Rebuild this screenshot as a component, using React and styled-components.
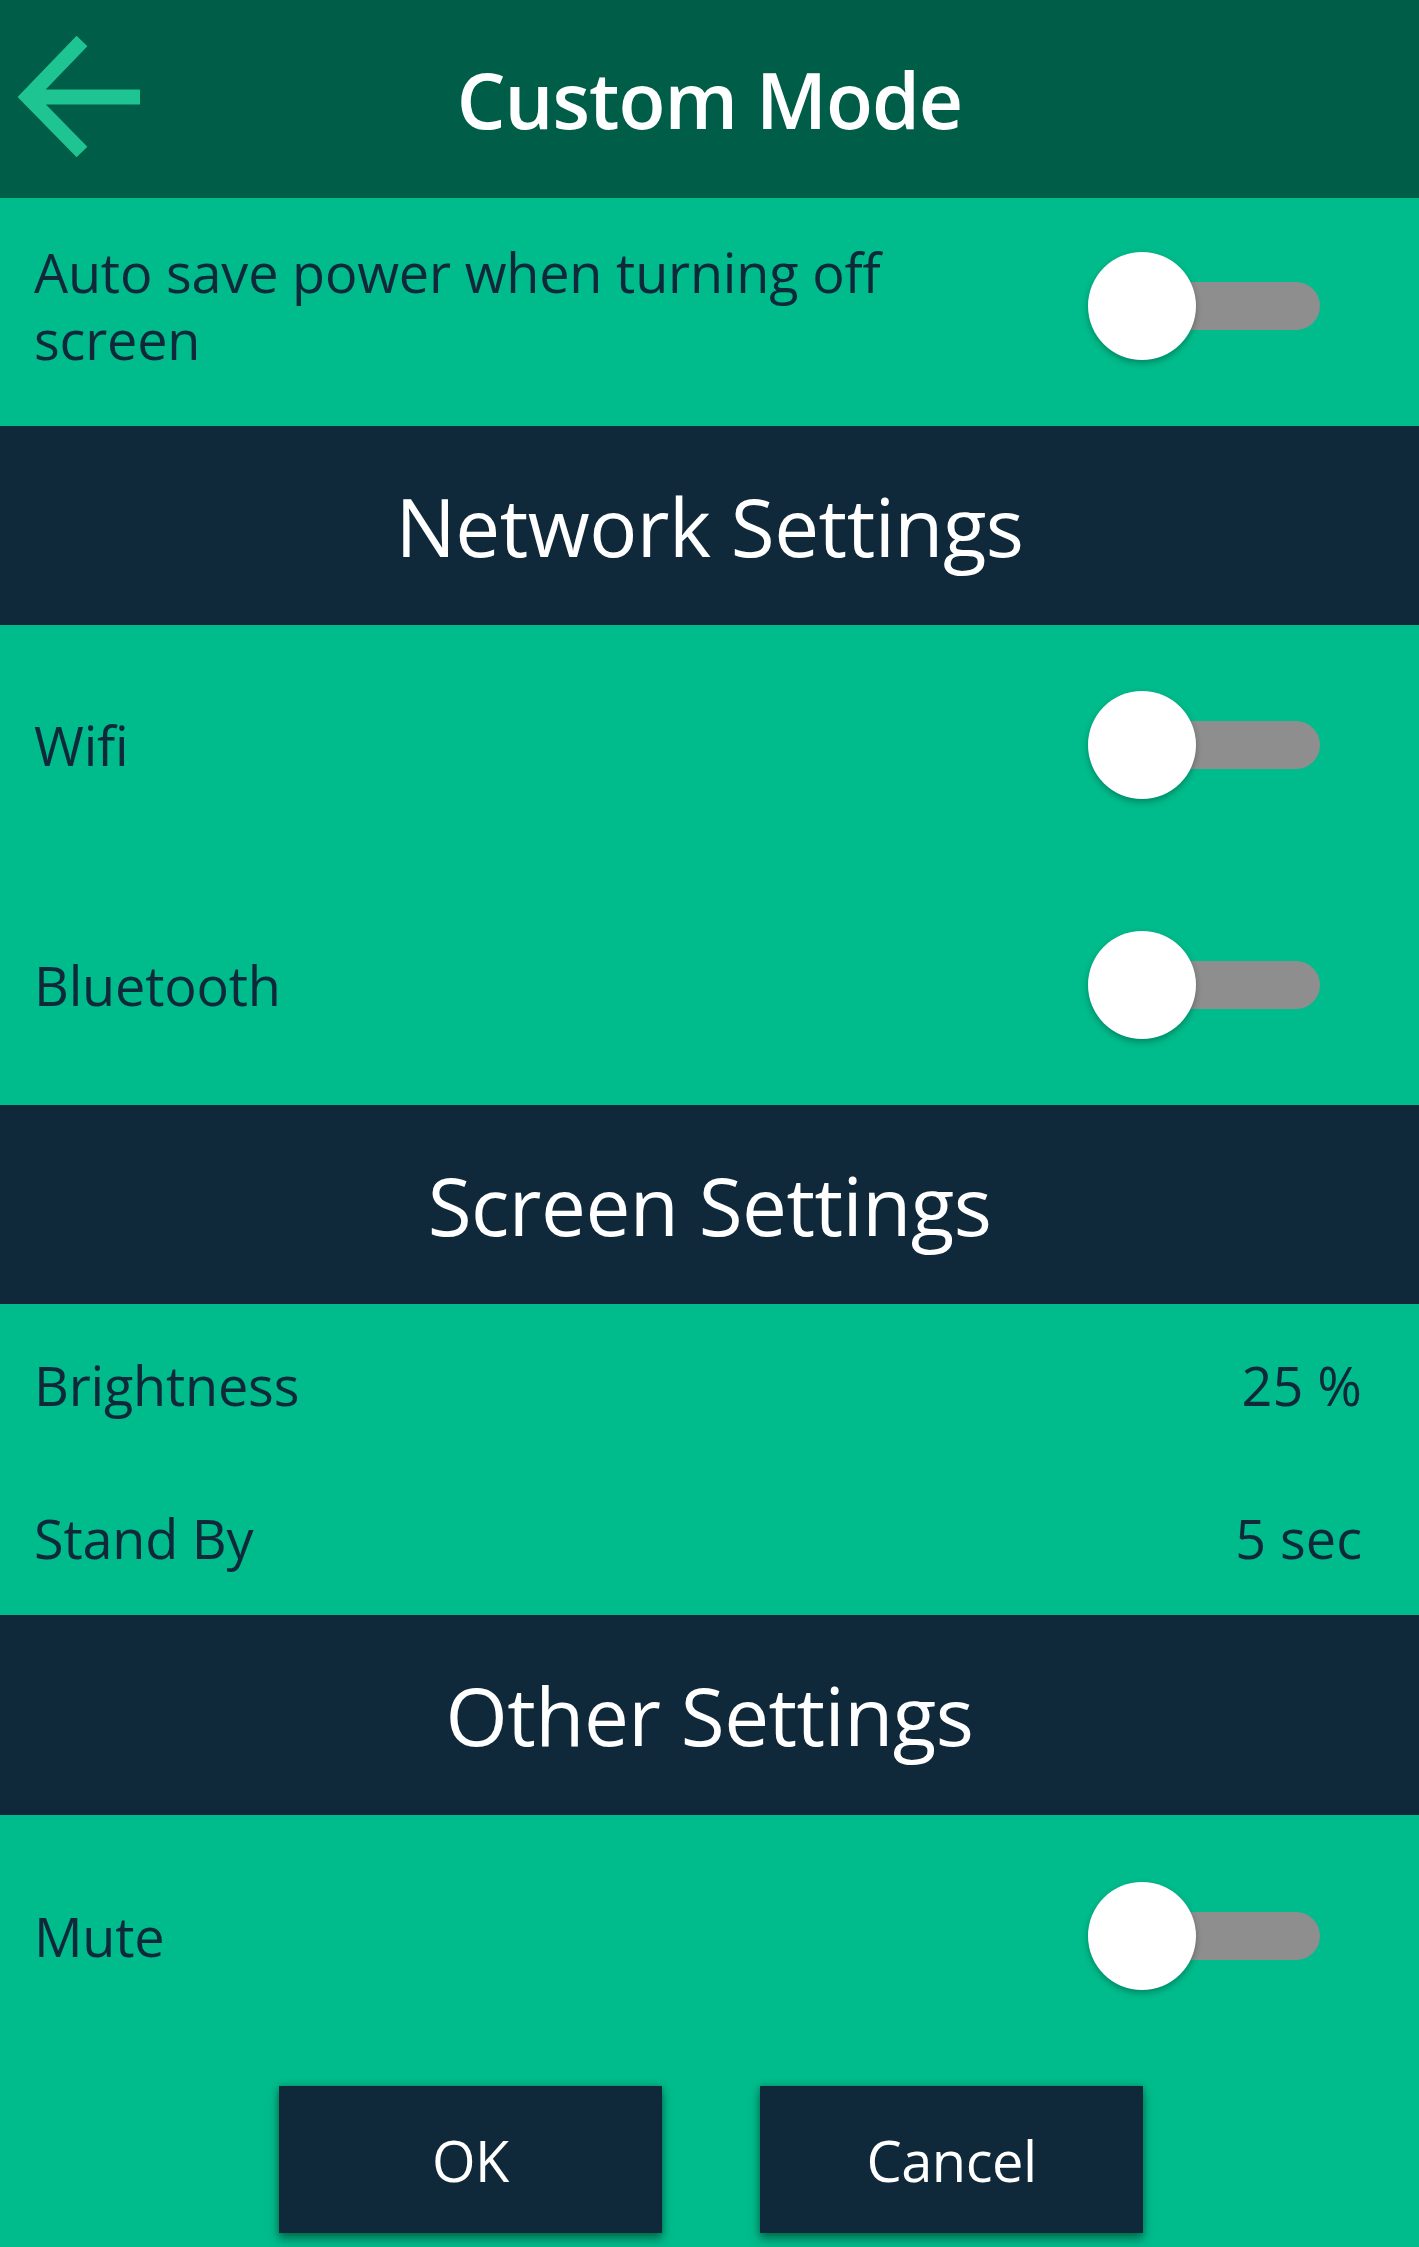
import React from "react";
import styled, { createGlobalStyle } from "styled-components";

const Global = createGlobalStyle`
  html, body { margin: 0; padding: 0; background: #00bb8b; }
  body { font-family: "Open Sans", "Noto Sans", sans-serif; }
  * { box-sizing: border-box; }
`;

const Page = styled.div`
  display: flex;
  flex-direction: column;
  min-height: 100vh;
  background: #00bb8b;
`;

const TopBar = styled.header`
  display: grid;
  grid-template-columns: 1fr auto 1fr;
  align-items: center;
  height: 198px;
  background: #005d47;
`;

const BackButton = styled.button`
  justify-self: start;
  display: flex;
  padding: 0;
  border: 0;
  background: transparent;
  cursor: pointer;
`;

const Title = styled.h1`
  margin: 0;
  color: #ffffff;
  font-size: 77px;
  font-weight: 600;
  line-height: 1;
  letter-spacing: -1px;
`;

const SectionHeader = styled.div`
  display: flex;
  align-items: center;
  justify-content: center;
  height: ${(p) => p.$h || 199}px;
  background: #10293a;
  color: #ffffff;
  font-size: 80px;
  line-height: 1;
  letter-spacing: -0.5px;
`;

const Group = styled.section`
  display: flex;
  flex-direction: column;
  padding-top: ${(p) => p.$pt || 0}px;
  background: #00bb8b;
`;

const Row = styled.div`
  display: flex;
  align-items: center;
  justify-content: space-between;
  height: ${(p) => p.$h}px;
  padding: 0 ${(p) => p.$pr}px ${(p) => p.$pb || 0}px 34px;
`;

const Label = styled.span`
  max-width: 960px;
  color: #10293a;
  font-size: 54px;
  line-height: 67px;
  letter-spacing: -0.2px;
`;

const Value = styled.span`
  color: #10293a;
  font-size: 54px;
  line-height: 67px;
`;

const Switch = styled.div`
  position: relative;
  flex-shrink: 0;
  width: 232px;
  height: 108px;
`;

const Track = styled.div`
  position: absolute;
  left: 40px;
  right: 0;
  top: 30px;
  height: 48px;
  border-radius: 24px;
  background: #8e8e8e;
`;

const Knob = styled.div`
  position: absolute;
  left: 0;
  top: 0;
  width: 108px;
  height: 108px;
  border-radius: 50%;
  background: #ffffff;
  box-shadow: 0 3px 6px rgba(0, 0, 0, 0.28);
`;

const Footer = styled.div`
  flex: 1;
  display: flex;
  justify-content: center;
  align-items: flex-start;
  gap: 98px;
  padding: 29px 0 14px 3px;
  background: #00bb8b;
`;

const ActionButton = styled.button`
  width: 383px;
  height: 147px;
  border: 0;
  background: #10293a;
  color: #ffffff;
  font-family: "Open Sans", "Noto Sans", sans-serif;
  font-size: 56px;
  letter-spacing: -0.5px;
  box-shadow: 0 6px 9px rgba(0, 60, 40, 0.55), 0 0 6px rgba(0, 60, 40, 0.35);
  cursor: pointer;
`;

function Toggle() {
  return (
    <Switch>
      <Track />
      <Knob />
    </Switch>
  );
}

function BackArrow() {
  return (
    <svg width="160" height="160" viewBox="0 0 160 160" aria-hidden="true">
      <path
        d="M82 22 L28 78 L82 133 M28 78 L140 78"
        fill="none"
        stroke="#1fc493"
        strokeWidth="15"
        strokeLinejoin="miter"
        strokeLinecap="butt"
      />
    </svg>
  );
}

export default function App() {
  return (
    <>
      <Global />
      <Page>
        <TopBar>
          <BackButton aria-label="Back">
            <BackArrow />
          </BackButton>
          <Title>Custom Mode</Title>
          <span />
        </TopBar>

        <Group>
          <Row $h={228} $pr={99} $pb={13}>
            <Label>Auto save power when turning off screen</Label>
            <Toggle />
          </Row>
        </Group>

        <SectionHeader>Network Settings</SectionHeader>
        <Group>
          <Row $h={240} $pr={99}>
            <Label>Wifi</Label>
            <Toggle />
          </Row>
          <Row $h={240} $pr={99}>
            <Label>Bluetooth</Label>
            <Toggle />
          </Row>
        </Group>

        <SectionHeader>Screen Settings</SectionHeader>
        <Group $pt={4}>
          <Row $h={154} $pr={57}>
            <Label>Brightness</Label>
            <Value>25 %</Value>
          </Row>
          <Row $h={153} $pr={57}>
            <Label>Stand By</Label>
            <Value>5 sec</Value>
          </Row>
        </Group>

        <SectionHeader $h={200}>Other Settings</SectionHeader>
        <Group>
          <Row $h={242} $pr={99}>
            <Label>Mute</Label>
            <Toggle />
          </Row>
        </Group>

        <Footer>
          <ActionButton>OK</ActionButton>
          <ActionButton>Cancel</ActionButton>
        </Footer>
      </Page>
    </>
  );
}
